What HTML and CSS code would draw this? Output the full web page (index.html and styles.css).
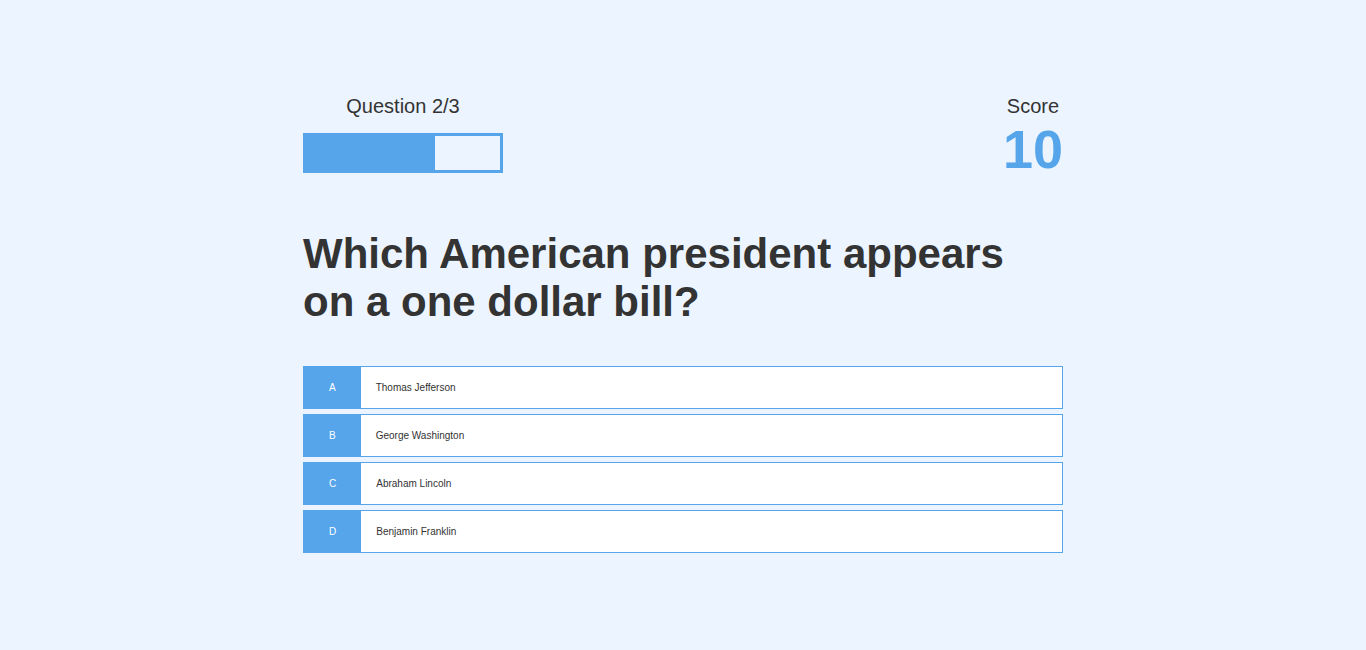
FILE: index.html
```html
<!DOCTYPE html>
<html lang="en">
<head>
<meta charset="utf-8">
<title>Quiz</title>
<link rel="stylesheet" href="styles.css">
</head>
<body>
<div class="container">
  <div class="game">
    <div class="hud">
      <div class="hud-item">
        <p class="hud-prefix">Question 2/3</p>
        <div class="progress-bar">
          <div class="progress-bar-full" style="width: 66.6667%"></div>
        </div>
      </div>
      <div class="hud-item">
        <p class="hud-prefix">Score</p>
        <h1 class="hud-main-text">10</h1>
      </div>
    </div>
    <h2 class="question">Which American president appears on a one dollar bill?</h2>
    <div class="choice-container">
      <p class="choice-prefix">A</p>
      <p class="choice-text">Thomas Jefferson</p>
    </div>
    <div class="choice-container">
      <p class="choice-prefix">B</p>
      <p class="choice-text">George Washington</p>
    </div>
    <div class="choice-container">
      <p class="choice-prefix">C</p>
      <p class="choice-text">Abraham Lincoln</p>
    </div>
    <div class="choice-container">
      <p class="choice-prefix">D</p>
      <p class="choice-text">Benjamin Franklin</p>
    </div>
  </div>
</div>
</body>
</html>
```

FILE: styles.css
```css
* {
  margin: 0;
  padding: 0;
  box-sizing: border-box;
}

html, body {
  height: 100%;
}

body {
  background-color: #ecf5ff;
  color: #333;
  font-family: "Liberation Sans", Arial, sans-serif;
}

.container {
  width: 100%;
  height: 100%;
  max-width: 800px;
  margin: 0 auto;
  padding: 23px 20px 20px;
  display: flex;
  flex-direction: column;
  justify-content: center;
}

.game {
  display: flex;
  flex-direction: column;
  justify-content: center;
}

.hud {
  display: flex;
  justify-content: space-between;
}

.hud-prefix {
  text-align: center;
  font-size: 20px;
  line-height: 23px;
}

.hud-main-text {
  text-align: center;
  font-size: 54px;
  line-height: 62px;
  font-weight: bold;
  color: #56a5eb;
  margin-bottom: 50px;
}

.progress-bar {
  width: 200px;
  height: 40px;
  border: 3px solid #56a5eb;
  margin-top: 15px;
}

.progress-bar-full {
  height: 100%;
  background-color: #56a5eb;
}

.question {
  font-size: 42px;
  line-height: 48px;
  font-weight: bold;
  margin-bottom: 40px;
}

.choice-container {
  display: flex;
  width: 100%;
  margin-bottom: 5px;
  font-size: 10px;
  line-height: 11px;
  border: 1px solid #56a5eb;
  background-color: #fff;
}

.choice-prefix {
  padding: 15px 25px;
  background-color: #56a5eb;
  color: #fff;
}

.choice-text {
  padding: 15px;
  width: 100%;
}
```
